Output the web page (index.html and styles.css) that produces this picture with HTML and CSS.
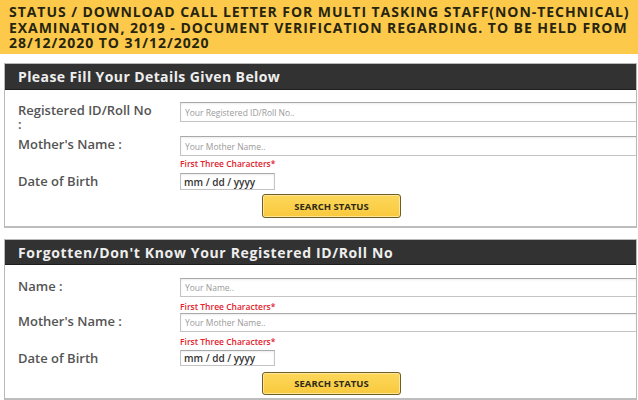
FILE: index.html
```html
<!DOCTYPE html>
<html lang="en">
<head>
<meta charset="utf-8">
<title>Status / Download Call Letter</title>
<link rel="stylesheet" href="styles.css">
</head>
<body>
<div class="page">
  <div class="notice">STATUS / DOWNLOAD CALL LETTER FOR MULTI TASKING STAFF(NON-TECHNICAL) EXAMINATION, 2019 - DOCUMENT VERIFICATION REGARDING. TO BE HELD FROM 28/12/2020 TO 31/12/2020</div>

  <div class="card card-one">
    <div class="card-head">Please Fill Your Details Given Below</div>
    <div class="card-body">
      <div class="row row-reg">
        <div class="label">Registered ID/Roll No :</div>
        <div class="field"><input class="text h20" type="text" placeholder="Your Registered ID/Roll No.."></div>
      </div>
      <div class="row row-mother1">
        <div class="label">Mother's Name :</div>
        <div class="field">
          <input class="text h20" type="text" placeholder="Your Mother Name..">
          <div class="hint hint-one">First Three Characters*</div>
        </div>
      </div>
      <div class="row row-dob1">
        <div class="label">Date of Birth</div>
        <div class="field"><input class="text date h17" type="text" placeholder="mm / dd / yyyy"></div>
      </div>
      <div class="actions actions-one"><button class="btn btn-one" type="button">SEARCH STATUS</button></div>
    </div>
  </div>

  <div class="card card-two">
    <div class="card-head head-two">Forgotten/Don't Know Your Registered ID/Roll No</div>
    <div class="card-body body-two">
      <div class="row">
        <div class="label">Name :</div>
        <div class="field">
          <input class="text h19" type="text" placeholder="Your Name..">
          <div class="hint">First Three Characters*</div>
        </div>
      </div>
      <div class="row">
        <div class="label">Mother's Name :</div>
        <div class="field">
          <input class="text h19" type="text" placeholder="Your Mother Name..">
          <div class="hint">First Three Characters*</div>
        </div>
      </div>
      <div class="row row-dob2">
        <div class="label">Date of Birth</div>
        <div class="field"><input class="text date h16" type="text" placeholder="mm / dd / yyyy"></div>
      </div>
      <div class="actions actions-two"><button class="btn btn-two" type="button">SEARCH STATUS</button></div>
    </div>
  </div>
</div>
</body>
</html>
```

FILE: styles.css
```css
html, body {
  margin: 0;
  padding: 0;
  background: #ffffff;
  overflow: hidden;
}
body {
  font-family: "Open Sans", "Liberation Sans", sans-serif;
  color: #444;
}
.page {
  width: 638px;
}
.notice {
  background: #fcc94b;
  color: #27250f;
  font-weight: 700;
  font-size: 14px;
  letter-spacing: 0.95px;
  line-height: 15.5px;
  padding: 4px 4px 4px 9px;
  height: 46px;
}
.card {
  margin: 9px 1px 0 4px;
  border: 1px solid #b9b9b9;
  border-bottom: 2px solid #bdbdbd;
  background: #fff;
  overflow: hidden;
}
.card-two {
  margin-top: 11px;
}
.card-head {
  background: #323232;
  color: #eeeeee;
  font-weight: 700;
  font-size: 14px;
  letter-spacing: 0.4px;
  height: 26px;
  line-height: 26px;
  padding-left: 13px;
  border-bottom: 1px solid #1e1e1e;
  box-sizing: border-box;
}
.head-two {
  height: 25px;
  line-height: 25px;
  letter-spacing: 0.65px;
}
.card-body {
  padding: 12px 0 8px 13px;
}
.body-two {
  padding-top: 13px;
  padding-bottom: 3px;
}
.row {
  display: flex;
  align-items: flex-start;
}
.label {
  width: 162px;
  flex: none;
  font-size: 13px;
  font-weight: 600;
  line-height: 14px;
  padding-top: 1px;
  color: #545454;
  padding-right: 14px;
  box-sizing: border-box;
}
.row-reg .label {
  padding-right: 26px;
}
.field {
  flex: 1;
  min-width: 0;
}
.text {
  display: block;
  box-sizing: border-box;
  width: 100%;
  margin: 0;
  border: 1px solid #c4c4c4;
  border-right: none;
  border-top-color: #a9a9a9;
  box-shadow: inset 0 1px 2px rgba(0,0,0,0.08);
  padding: 0 4px;
  font-family: "Open Sans", "Liberation Sans", sans-serif;
  font-size: 8.5px;
  color: #333;
  background: #fff;
  outline: none;
}
.text::placeholder {
  color: #9a9a9a;
}
.h20 { height: 20px; }
.h19 { height: 19px; }
.h17 { height: 17px; }
.h16 { height: 16px; }
.date {
  width: 95px;
  border-right: 1px solid #c4c4c4;
  padding-left: 3px;
  font-size: 10px;
  font-weight: 600;
}
.date::placeholder {
  color: #333;
}
.row-reg {
  margin-bottom: 5px;
}
.hint {
  color: #e3202c;
  font-size: 8.5px;
  font-weight: 600;
  line-height: 12px;
  margin-top: 4px;
}
.hint-one {
  margin-top: 2px;
}
.row-dob1 {
  margin-top: 3px;
}
.row-dob2 {
  margin-top: 2px;
}
.actions {
  padding-left: 244px;
}
.actions-one {
  margin-top: 4px;
}
.actions-two {
  margin-top: 6px;
}
.btn {
  display: block;
  width: 139px;
  height: 24px;
  box-sizing: border-box;
  border: 1px solid #6f5d22;
  border-radius: 3px;
  background: linear-gradient(#fdd75a, #f9c93d);
  box-shadow: inset 0 0 0 1px #fde79a;
  color: #2e2a17;
  font-family: "Open Sans", "Liberation Sans", sans-serif;
  font-weight: 700;
  font-size: 9.5px;
  letter-spacing: 0px;
  padding: 0;
  cursor: pointer;
}
.btn-two {
  height: 23px;
}
```
